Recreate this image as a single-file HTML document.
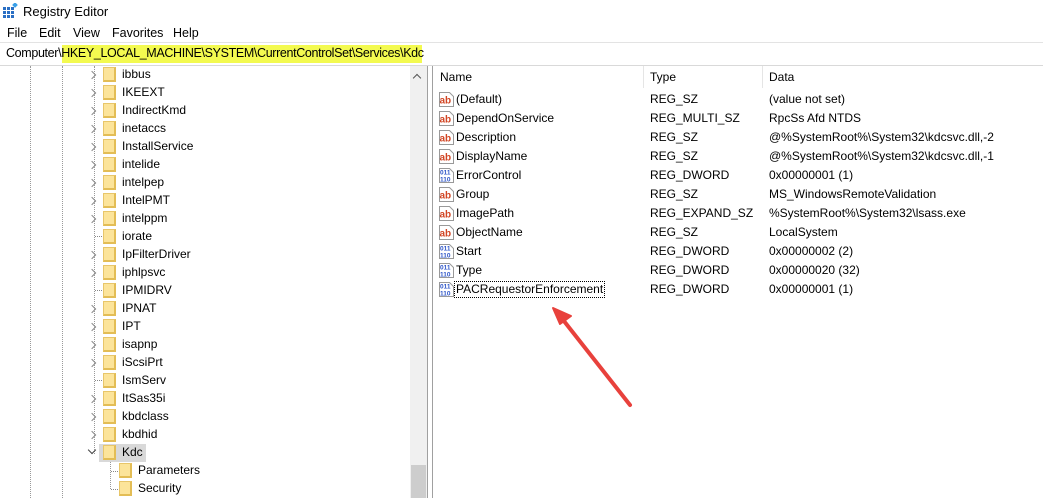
<!DOCTYPE html>
<html><head><meta charset="utf-8"><style>
*{margin:0;padding:0;box-sizing:border-box}
body{width:1043px;height:498px;overflow:hidden;background:#fff;font-family:"Liberation Sans",Arial,sans-serif;font-size:12px;color:#000;position:relative}
.a{position:absolute;white-space:nowrap}
.t{position:absolute;height:18px;line-height:18px}
.f{position:absolute;width:13px;height:15px;background:#fce49a;border:1px solid #e8c66a;border-right:2px solid #e3bd55;border-bottom:2px solid #e3bd55}
.ch{position:absolute;left:89px;width:6px;height:6px;border-right:1.5px solid #8a8a8a;border-top:1.5px solid #8a8a8a;transform:rotate(45deg)}
.dl{position:absolute;border-top:1px dotted #888;width:7px}
.vl{position:absolute;border-left:1px dotted #999}
.ic{position:absolute;width:15px;height:15px;left:439px}
</style></head><body>
<svg class="a" style="left:3px;top:3px" width="15" height="15" viewBox="0 0 15 15"><g fill="#2a6fc4"><rect x="0" y="4" width="3" height="3"/><rect x="4" y="4" width="3" height="3"/><rect x="8" y="4" width="3" height="3"/><rect x="0" y="8" width="3" height="3"/><rect x="4" y="8" width="3" height="3"/><rect x="8" y="8" width="3" height="3"/><rect x="0" y="12" width="3" height="3"/><rect x="4" y="12" width="3" height="3"/><rect x="8" y="12" width="3" height="3"/></g><rect x="10" y="0" width="4" height="4" fill="#3aa0e8" transform="rotate(45 12 2)"/></svg>
<div class="a" style="left:23px;top:4px;font-size:13px">Registry Editor</div>
<div class="a" style="left:7px;top:26px;font-size:12.5px">File</div>
<div class="a" style="left:39px;top:26px;font-size:12.5px">Edit</div>
<div class="a" style="left:73px;top:26px;font-size:12.5px">View</div>
<div class="a" style="left:112px;top:26px;font-size:12.5px">Favorites</div>
<div class="a" style="left:173px;top:26px;font-size:12.5px">Help</div>
<div class="a" style="left:0;top:42px;width:1043px;height:1px;background:#e3e3e3"></div>
<div class="a" style="left:0;top:65px;width:1043px;height:1px;background:#d9d9d9"></div>
<div class="a" style="left:62px;top:45px;width:360px;height:18px;background:#f3fa50"></div>
<div class="a" style="left:6px;top:46px;font-size:12.5px;letter-spacing:-0.35px">Computer\HKEY_LOCAL_MACHINE\SYSTEM\CurrentControlSet\Services\Kdc</div>
<div class="vl" style="left:30px;top:66px;height:432px"></div>
<div class="vl" style="left:62px;top:66px;height:432px"></div>
<div class="vl" style="left:94px;top:66px;height:388px"></div>
<div class="a" style="left:410px;top:66px;width:17px;height:432px;background:#f0f0f0"></div>
<div class="a" style="left:411px;top:465px;width:15px;height:33px;background:#cdcdcd"></div>
<div class="a" style="left:414px;top:75px;width:6px;height:6px;border-left:1.5px solid #555;border-top:1.5px solid #555;transform:rotate(45deg)"></div>
<div class="a" style="left:427px;top:66px;width:6px;height:432px;background:#fff;border-left:1px solid #a0a0a0;border-right:1px solid #a0a0a0"></div>

<div class="ch" style="top:72px"></div><div class="f" style="left:103px;top:67px"></div><div class="t" style="left:122px;top:65px">ibbus</div>
<div class="ch" style="top:90px"></div><div class="f" style="left:103px;top:85px"></div><div class="t" style="left:122px;top:83px">IKEEXT</div>
<div class="ch" style="top:108px"></div><div class="f" style="left:103px;top:103px"></div><div class="t" style="left:122px;top:101px">IndirectKmd</div>
<div class="ch" style="top:126px"></div><div class="f" style="left:103px;top:121px"></div><div class="t" style="left:122px;top:119px">inetaccs</div>
<div class="ch" style="top:144px"></div><div class="f" style="left:103px;top:139px"></div><div class="t" style="left:122px;top:137px">InstallService</div>
<div class="ch" style="top:162px"></div><div class="f" style="left:103px;top:157px"></div><div class="t" style="left:122px;top:155px">intelide</div>
<div class="ch" style="top:180px"></div><div class="f" style="left:103px;top:175px"></div><div class="t" style="left:122px;top:173px">intelpep</div>
<div class="ch" style="top:198px"></div><div class="f" style="left:103px;top:193px"></div><div class="t" style="left:122px;top:191px">IntelPMT</div>
<div class="ch" style="top:216px"></div><div class="f" style="left:103px;top:211px"></div><div class="t" style="left:122px;top:209px">intelppm</div>
<div class="dl" style="left:95px;top:236px"></div><div class="f" style="left:103px;top:229px"></div><div class="t" style="left:122px;top:227px">iorate</div>
<div class="ch" style="top:252px"></div><div class="f" style="left:103px;top:247px"></div><div class="t" style="left:122px;top:245px">IpFilterDriver</div>
<div class="ch" style="top:270px"></div><div class="f" style="left:103px;top:265px"></div><div class="t" style="left:122px;top:263px">iphlpsvc</div>
<div class="dl" style="left:95px;top:290px"></div><div class="f" style="left:103px;top:283px"></div><div class="t" style="left:122px;top:281px">IPMIDRV</div>
<div class="ch" style="top:306px"></div><div class="f" style="left:103px;top:301px"></div><div class="t" style="left:122px;top:299px">IPNAT</div>
<div class="ch" style="top:324px"></div><div class="f" style="left:103px;top:319px"></div><div class="t" style="left:122px;top:317px">IPT</div>
<div class="ch" style="top:342px"></div><div class="f" style="left:103px;top:337px"></div><div class="t" style="left:122px;top:335px">isapnp</div>
<div class="ch" style="top:360px"></div><div class="f" style="left:103px;top:355px"></div><div class="t" style="left:122px;top:353px">iScsiPrt</div>
<div class="dl" style="left:95px;top:380px"></div><div class="f" style="left:103px;top:373px"></div><div class="t" style="left:122px;top:371px">IsmServ</div>
<div class="ch" style="top:396px"></div><div class="f" style="left:103px;top:391px"></div><div class="t" style="left:122px;top:389px">ItSas35i</div>
<div class="ch" style="top:414px"></div><div class="f" style="left:103px;top:409px"></div><div class="t" style="left:122px;top:407px">kbdclass</div>
<div class="ch" style="top:432px"></div><div class="f" style="left:103px;top:427px"></div><div class="t" style="left:122px;top:425px">kbdhid</div>
<div class="a" style="left:99px;top:444px;width:47px;height:18px;background:#d9d9d9"></div>
<div class="a" style="left:89px;top:447px;width:6px;height:6px;border-right:1.5px solid #444;border-bottom:1.5px solid #444;transform:rotate(45deg)"></div>
<div class="f" style="left:103px;top:445px"></div><div class="t" style="left:122px;top:443px">Kdc</div>
<div class="vl" style="left:110px;top:462px;height:27px"></div>
<div class="dl" style="left:111px;top:471px"></div><div class="dl" style="left:111px;top:489px"></div>
<div class="f" style="left:119px;top:463px"></div><div class="t" style="left:138px;top:461px">Parameters</div>
<div class="f" style="left:119px;top:481px"></div><div class="t" style="left:138px;top:479px">Security</div>

<div class="a" style="left:643px;top:66px;width:1px;height:22px;background:#e5e5e5"></div>
<div class="a" style="left:762px;top:66px;width:1px;height:22px;background:#e5e5e5"></div>
<div class="a" style="left:440px;top:70px">Name</div>
<div class="a" style="left:650px;top:70px">Type</div>
<div class="a" style="left:769px;top:70px">Data</div>

<svg width="0" height="0" style="position:absolute"><defs>
<symbol id="ab" viewBox="0 0 15 15"><path d="M0.5 0.5h10l4 4v10h-14z" fill="#fff" stroke="#999"/><text x="0.5" y="11.5" font-family="Liberation Sans" font-weight="bold" font-size="10" fill="#d24624">ab</text></symbol>
<symbol id="bn" viewBox="0 0 15 15"><path d="M0.5 0.5h10l4 4v10h-14z" fill="#fff" stroke="#999"/><text x="1" y="6.5" font-family="Liberation Sans" font-weight="bold" font-size="6.5" fill="#2d55c8">011</text><text x="1" y="13.5" font-family="Liberation Sans" font-weight="bold" font-size="6.5" fill="#2d55c8">110</text></symbol>
</defs></svg>

<svg class="ic" style="top:92px" viewBox="0 0 15 15"><use href="#ab"/></svg><div class="a" style="left:456px;top:92px">(Default)</div><div class="a" style="left:650px;top:92px">REG_SZ</div><div class="a" style="left:769px;top:92px">(value not set)</div>
<svg class="ic" style="top:111px" viewBox="0 0 15 15"><use href="#ab"/></svg><div class="a" style="left:456px;top:111px">DependOnService</div><div class="a" style="left:650px;top:111px">REG_MULTI_SZ</div><div class="a" style="left:769px;top:111px">RpcSs Afd NTDS</div>
<svg class="ic" style="top:130px" viewBox="0 0 15 15"><use href="#ab"/></svg><div class="a" style="left:456px;top:130px">Description</div><div class="a" style="left:650px;top:130px">REG_SZ</div><div class="a" style="left:769px;top:130px">@%SystemRoot%\System32\kdcsvc.dll,-2</div>
<svg class="ic" style="top:149px" viewBox="0 0 15 15"><use href="#ab"/></svg><div class="a" style="left:456px;top:149px">DisplayName</div><div class="a" style="left:650px;top:149px">REG_SZ</div><div class="a" style="left:769px;top:149px">@%SystemRoot%\System32\kdcsvc.dll,-1</div>
<svg class="ic" style="top:168px" viewBox="0 0 15 15"><use href="#bn"/></svg><div class="a" style="left:456px;top:168px">ErrorControl</div><div class="a" style="left:650px;top:168px">REG_DWORD</div><div class="a" style="left:769px;top:168px">0x00000001 (1)</div>
<svg class="ic" style="top:187px" viewBox="0 0 15 15"><use href="#ab"/></svg><div class="a" style="left:456px;top:187px">Group</div><div class="a" style="left:650px;top:187px">REG_SZ</div><div class="a" style="left:769px;top:187px">MS_WindowsRemoteValidation</div>
<svg class="ic" style="top:206px" viewBox="0 0 15 15"><use href="#ab"/></svg><div class="a" style="left:456px;top:206px">ImagePath</div><div class="a" style="left:650px;top:206px">REG_EXPAND_SZ</div><div class="a" style="left:769px;top:206px">%SystemRoot%\System32\lsass.exe</div>
<svg class="ic" style="top:225px" viewBox="0 0 15 15"><use href="#ab"/></svg><div class="a" style="left:456px;top:225px">ObjectName</div><div class="a" style="left:650px;top:225px">REG_SZ</div><div class="a" style="left:769px;top:225px">LocalSystem</div>
<svg class="ic" style="top:244px" viewBox="0 0 15 15"><use href="#bn"/></svg><div class="a" style="left:456px;top:244px">Start</div><div class="a" style="left:650px;top:244px">REG_DWORD</div><div class="a" style="left:769px;top:244px">0x00000002 (2)</div>
<svg class="ic" style="top:263px" viewBox="0 0 15 15"><use href="#bn"/></svg><div class="a" style="left:456px;top:263px">Type</div><div class="a" style="left:650px;top:263px">REG_DWORD</div><div class="a" style="left:769px;top:263px">0x00000020 (32)</div>
<svg class="ic" style="top:282px" viewBox="0 0 15 15"><use href="#bn"/></svg><div class="a" style="left:454px;top:281px;border:1px dotted #000;padding:0 1px;height:17px;line-height:15px">PACRequestorEnforcement</div><div class="a" style="left:650px;top:282px">REG_DWORD</div><div class="a" style="left:769px;top:282px">0x00000001 (1)</div>

<svg class="a" style="left:540px;top:300px" width="110" height="115"><line x1="90" y1="105" x2="20" y2="16" stroke="#e8413c" stroke-width="4" stroke-linecap="round"/><path d="M13 8 L31 16 L20 24 Z" fill="#e8413c" stroke="#e8413c" stroke-width="2" stroke-linejoin="round"/></svg>
</body></html>
